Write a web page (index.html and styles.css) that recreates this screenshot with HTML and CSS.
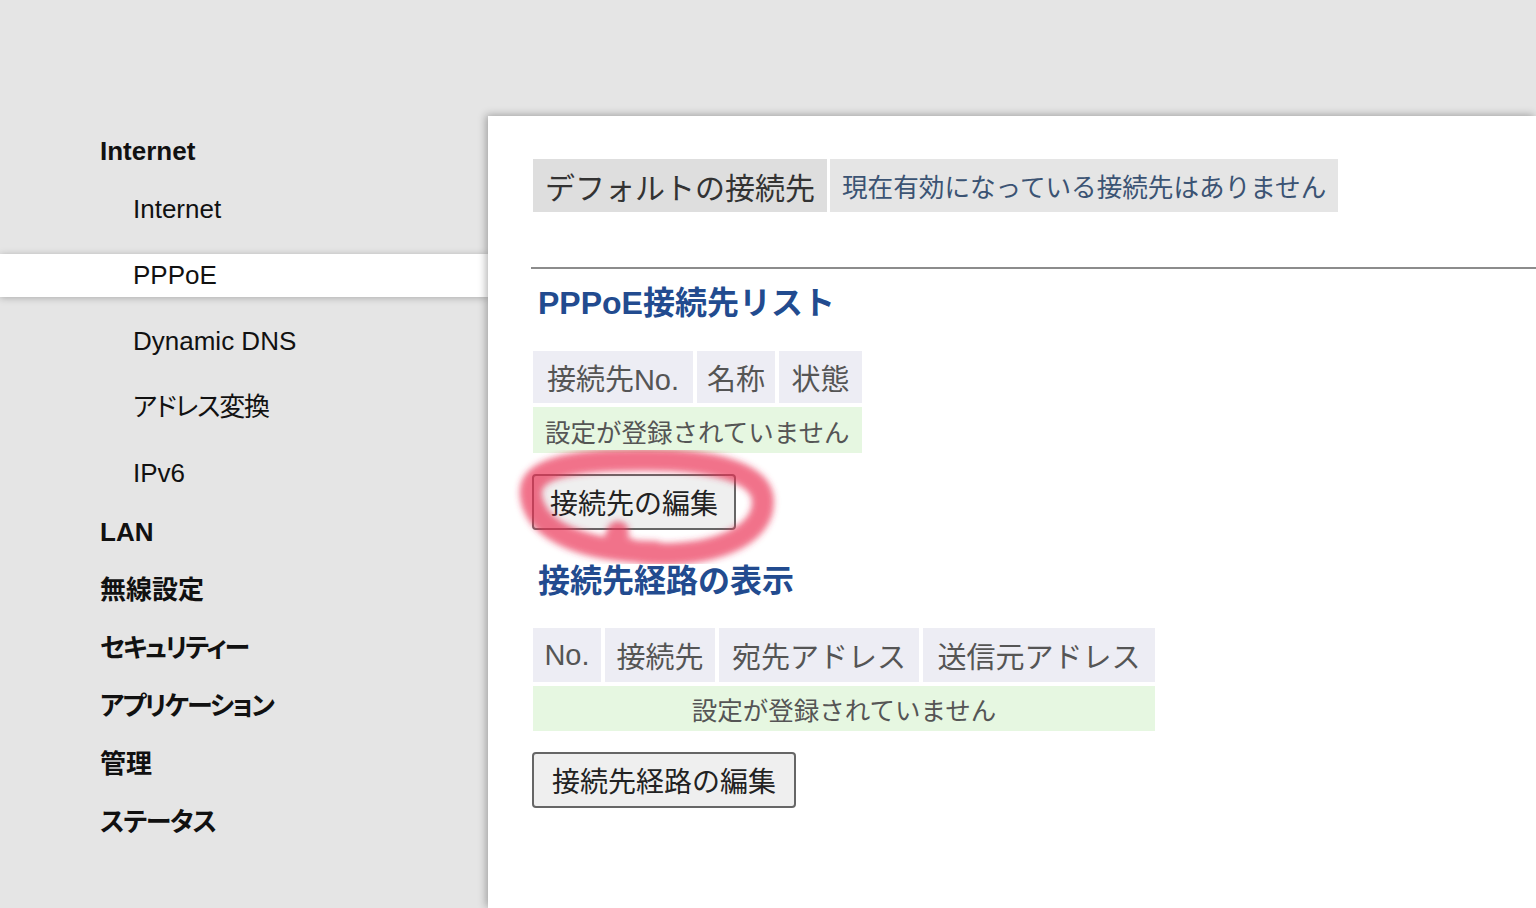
FILE: index.html
```html
<!DOCTYPE html>
<html lang="ja">
<head>
    <meta charset="UTF-8">
    <meta name="viewport" content="width=device-width, initial-scale=1.0">
    <title>PPPoE</title>
    <link rel="stylesheet" href="styles.css">
</head>
<body>
    <div class="page">
        <aside class="sidebar">
            <ul class="nav">
                <li class="nav-title">Internet</li>
                <li class="nav-sub">Internet</li>
                <li class="nav-sub active">PPPoE</li>
                <li class="nav-sub">Dynamic DNS</li>
                <li class="nav-sub kana">アドレス変換</li>
                <li class="nav-sub last">IPv6</li>
                <li class="nav-title">LAN</li>
                <li class="nav-title">無線設定</li>
                <li class="nav-title kana-wide">セキュリティー</li>
                <li class="nav-title kana-wide">アプリケーション</li>
                <li class="nav-title">管理</li>
                <li class="nav-title kana">ステータス</li>
            </ul>
        </aside>

        <main class="panel">
            <table class="info">
                <tr>
                    <td class="info-label">デフォルトの接続先</td>
                    <td class="info-value">現在有効になっている接続先はありません</td>
                </tr>
            </table>

            <hr class="rule">

            <h2 class="section-title">PPPoE接続先リスト</h2>
            <table class="grid grid-pppoe">
                <tr>
                    <th class="col-id">接続先No.</th>
                    <th class="col-name">名称</th>
                    <th class="col-state">状態</th>
                </tr>
                <tr>
                    <td colspan="3" class="empty left">設定が登録されていません</td>
                </tr>
            </table>

            <div class="btn-wrap">
                <button class="btn">接続先の編集</button>
                <svg class="mark" viewBox="507 434 280 150" width="280" height="150">
                    <defs>
                        <filter id="soft" x="-10%" y="-10%" width="120%" height="120%">
                            <feGaussianBlur stdDeviation="3"/>
                        </filter>
                    </defs>
                    <path d="M655 552 C590 552 536 534 531 496 C527 468 572 460 640 460 C712 459 763 472 763 502 C763 534 720 554 662 554 C628 554 610 544 618 532"
                          fill="none" stroke="#ea3052" stroke-opacity="0.68" stroke-width="22" stroke-linecap="round" filter="url(#soft)"/>
                </svg>
            </div>

            <h2 class="section-title second">接続先経路の表示</h2>
            <table class="grid grid-route">
                <tr>
                    <th class="col-no">No.</th>
                    <th class="col-conn">接続先</th>
                    <th class="col-dst">宛先アドレス</th>
                    <th class="col-src">送信元アドレス</th>
                </tr>
                <tr>
                    <td colspan="4" class="empty">設定が登録されていません</td>
                </tr>
            </table>

            <div class="btn-wrap">
                <button class="btn">接続先経路の編集</button>
            </div>
        </main>
    </div>
</body>
</html>
```

FILE: styles.css
```css
body {
    margin: 0;
    background-color: #e5e5e5;
    font-family: "Liberation Sans", "Noto Sans CJK JP", sans-serif;
    overflow: hidden;
}

.page {
    display: flex;
    padding-top: 116px;
    height: 908px;
    box-sizing: border-box;
}

.sidebar {
    width: 488px;
    flex: none;
}

.nav {
    list-style: none;
    margin: 0;
    padding: 14px 0 0;
}

.nav li {
    height: 43px;
    line-height: 43px;
    font-size: 26px;
    color: #111;
    font-feature-settings: "palt";
    white-space: nowrap;
}

.nav li.kana {
    letter-spacing: -1.2px;
}

.nav li.kana-wide {
    letter-spacing: -2px;
}

.nav-title {
    padding-left: 100px;
    font-weight: bold;
    margin-bottom: 15px;
}

.nav-sub {
    padding-left: 133px;
    margin-bottom: 23px;
}

.nav-sub.last {
    margin-bottom: 16px;
}

.nav-sub.active {
    background: #fff;
    box-shadow: 0 1px 7px rgba(0, 0, 0, 0.25);
}

.panel {
    flex: 1;
    background: #fff;
    box-shadow: -2px -1px 8px rgba(0, 0, 0, 0.3);
    padding: 43px 0 0 45px;
}

.info {
    border-collapse: separate;
    border-spacing: 3px 0;
    margin-left: -3px;
}

.info td {
    height: 53px;
    padding: 0 12px;
    white-space: nowrap;
}

.info-label {
    background: #dedede;
    font-size: 30px;
    color: #333;
}

.info-value {
    background: #e5e5e5;
    font-size: 25.6px;
    color: #3b5373;
    padding-left: 10px;
}

.rule {
    border: 0;
    border-top: 2px solid #8c8c8c;
    height: 0;
    margin: 55px 0 0 -2px;
}

.section-title {
    font-size: 32px;
    line-height: 40px;
    color: #224b8f;
    font-weight: bold;
    margin: 14px 0 0 5px;
}

.section-title.second {
    margin-top: 31px;
}

.grid {
    border-collapse: separate;
    border-spacing: 4px;
    margin: 24px 0 0 -4px;
}

.grid-route {
    margin-top: 23px;
}

.grid th {
    height: 52px;
    padding: 0;
    background: #ededf4;
    font-size: 29px;
    font-weight: normal;
    color: #555;
    text-align: center;
    white-space: nowrap;
}

.grid-route th {
    height: 54px;
}

.col-id { width: 160px; }
.col-name { width: 78px; }
.col-state { width: 83px; }
.col-no { width: 68px; }
.col-conn { width: 110px; }
.col-dst { width: 200px; }
.col-src { width: 232px; }

.grid td.empty {
    height: 46px;
    padding: 0 12px;
    background: #e6f7e1;
    font-size: 25.5px;
    color: #555;
    text-align: center;
    white-space: nowrap;
}

.grid-route td.empty {
    height: 45px;
}

.grid td.left {
    text-align: left;
    padding-right: 10px;
}

.btn-wrap {
    position: relative;
    display: flex;
    margin-top: 17px;
}

.btn {
    height: 56px;
    margin-left: -1px;
    padding: 0 16px;
    font-family: inherit;
    font-size: 28px;
    color: #222;
    background: #efefef;
    border: 2px solid #666;
    border-radius: 4px;
}

.grid-route + .btn-wrap .btn {
    padding: 0 18px;
}

.mark {
    position: absolute;
    left: -26px;
    top: -40px;
    pointer-events: none;
}
```
